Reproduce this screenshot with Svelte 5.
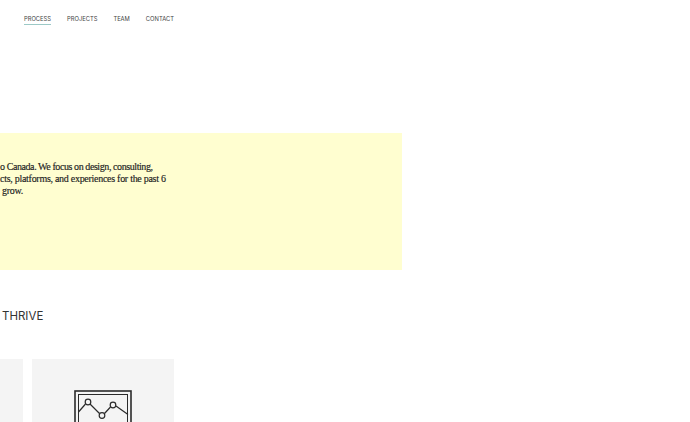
<script>
  const nav = ['PROCESS', 'PROJECTS', 'TEAM', 'CONTACT'];
</script>

<div class="page">
  <nav class="nav">
    {#each nav as item, i}
      <a class="link" class:active={i === 0} href="#top">{item}</a>
    {/each}
  </nav>

  <section class="hero">
    <p class="intro">
      <span class="first">o Canada. We focus on design, consulting,</span>
      <span>cts, platforms, and experiences for the past 6</span>
      <span class="last">grow.</span>
    </p>
  </section>

  <h2 class="title">THRIVE</h2>

  <div class="cards">
    <div class="card"></div>
    <div class="card">
      <svg class="icon" viewBox="0 0 58 70" width="58" height="70" fill="none" stroke="#2b2b2b">
        <rect x="1" y="1" width="56" height="68" stroke-width="1.6" />
        <rect x="4.500" y="4.500" width="49" height="61" stroke-width="1" />
        <path d="M4.500 22 L11.500 14 M16 14 L25.500 23.500 M30.500 23.500 L36.500 17 M42 16 L54 24.500" stroke-width="1.200" />
        <circle cx="14" cy="12" r="2.800" stroke-width="1.200" />
        <circle cx="28" cy="25.500" r="2.800" stroke-width="1.200" />
        <circle cx="39" cy="15" r="2.800" stroke-width="1.200" />
      </svg>
    </div>
  </div>
</div>

<style>
  :global(body) {
    margin: 0;
    background: #fff;
    overflow: hidden;
  }

  .page {
    width: 690px;
    height: 422px;
    overflow: hidden;
  }

  .nav {
    display: flex;
    gap: 16px;
    padding: 14px 0 0 24px;
    height: 133px;
    box-sizing: border-box;
    font-family: "Inter", "Liberation Sans", sans-serif;
    font-size: 5.800px;
  }

  .link {
    color: #444;
    text-decoration: none;
    height: 10px;
    line-height: 9px;
  }

  .active {
    border-bottom: 1px solid #9cc9c6;
  }

  .hero {
    width: 402px;
    height: 137px;
    background: #fffed0;
    padding-top: 28px;
    box-sizing: border-box;
  }

  .intro {
    margin: 0;
    font-family: "Liberation Serif", serif;
    font-size: 10px;
    letter-spacing: -0.280px;
    -webkit-text-stroke: 0.150px #222;
    line-height: 12px;
    color: #222;
  }

  .intro span {
    display: block;
    white-space: nowrap;
  }

  .intro .first {
    letter-spacing: -0.420px;
  }

  .intro .last {
    padding-left: 2px;
  }

  .title {
    margin: 38px 0 0 2px;
    font-family: "Inter", sans-serif;
    font-size: 11.500px;
    font-weight: 400;
    line-height: 16px;
    color: #333;
  }

  .cards {
    display: grid;
    grid-template-columns: 23px 142px;
    gap: 9px;
    margin-top: 35px;
  }

  .card {
    height: 140px;
    background: #f4f4f4;
    display: flex;
    justify-content: center;
    padding-top: 31px;
    box-sizing: border-box;
  }
</style>
